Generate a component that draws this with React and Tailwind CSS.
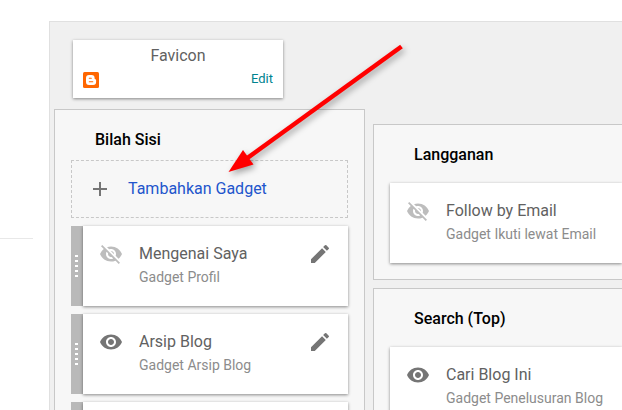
import React from "react";
import { MdAdd, MdEdit, MdVisibility, MdVisibilityOff } from "react-icons/md";

const sidebarGadgets = [
  { title: "Mengenai Saya", description: "Gadget Profil", visible: false },
  { title: "Arsip Blog", description: "Gadget Arsip Blog", visible: true },
];

const BloggerIcon = () => (
  <svg viewBox="0 0 16 16" className="size-4" aria-hidden="true">
    <rect width="16" height="16" rx="1.5" fill="#ff6600" />
    <path
      fill="#fff"
      d="M6 3h2.6a3 3 0 0 1 3 3v.6c0 .4.3.6.7.6.5 0 .8.3.8.8v2a3 3 0 0 1-3 3H6a3 3 0 0 1-3-3V6a3 3 0 0 1 3-3z"
    />
    <path stroke="#ff6600" strokeWidth="1.1" strokeLinecap="round" d="M6.3 6.3h2M6.3 9.7h3.5" />
  </svg>
);

const DragHandle = () => (
  <div className="flex w-3 shrink-0 cursor-move flex-col justify-center gap-[3px] bg-[#b9b9b9] pl-1">
    {[0, 1, 2, 3, 4].map((dot) => (
      <span key={dot} className="h-0.5 w-[3px] bg-white" />
    ))}
  </div>
);

const Gadget = ({ title, description, visible, draggable }) => {
  const Eye = visible ? MdVisibility : MdVisibilityOff;

  return (
    <li className="flex h-20">
      {draggable && <DragHandle />}
      <div className="flex min-w-0 flex-1 items-start bg-white p-4 shadow-[0_1px_3px_rgba(0,0,0,0.45)]">
        <Eye className={visible ? "size-6 shrink-0 text-[#757575]" : "size-6 shrink-0 text-[#bdbdbd]"} />
        <div className="ml-4 min-w-0 flex-1 whitespace-nowrap">
          <h3 className="text-base leading-6 text-[#616161]">{title}</h3>
          <p className="text-sm leading-[22px] text-[#8c8c8c]">{description}</p>
        </div>
        {draggable && (
          <button type="button" aria-label={`Edit ${title}`} className="cursor-pointer">
            <MdEdit className="size-6 text-[#757575]" />
          </button>
        )}
      </div>
    </li>
  );
};

const EmptySlot = () => (
  <li className="flex h-20">
    <DragHandle />
    <div className="flex-1 bg-white shadow-[0_1px_3px_rgba(0,0,0,0.45)]" />
  </li>
);

const SectionTitle = ({ children }) => (
  <h2 className="pl-6 text-base leading-6 font-medium text-black">{children}</h2>
);

const Arrow = () => (
  <svg
    viewBox="0 0 190 144"
    className="pointer-events-none absolute top-9 left-[222px] w-[190px] drop-shadow-[2px_3px_3px_rgba(0,0,0,0.35)]"
    aria-hidden="true"
  >
    <path d="M179.500 10.500 L24 123" stroke="#ff0000" strokeWidth="4.6" />
    <path d="M6.500 136 L21 114 L31.500 128.500 Z" fill="#ff0000" />
  </svg>
);

const App = () => {
  return (
    <div className="relative flex h-screen overflow-hidden bg-white font-['Roboto',sans-serif]">
      <nav className="w-[49px] shrink-0 pt-[238px]">
        <hr className="mr-4 border-[#e8e8e8]" />
      </nav>

      <main className="mt-[21px] flex min-w-0 flex-1 items-start gap-2 border-t border-l border-[#e0e0e0] bg-[#f0f0f0] pl-1">
        <div className="w-[311px] shrink-0 pt-[18px]">
          <section className="ml-[19px] w-[210px] bg-white px-2.5 pt-1 pb-2.5 shadow-[0_1px_3px_rgba(0,0,0,0.45)]">
            <h2 className="text-center text-base leading-6 text-[#616161]">Favicon</h2>
            <div className="flex h-5 items-end justify-between">
              <BloggerIcon />
              <a href="#favicon" className="text-[13px] leading-[18px] text-[#00838f]">
                Edit
              </a>
            </div>
          </section>

          <section className="mt-[11px] border border-[#c8c8c8] bg-[#f7f7f7] px-4 pt-[18px] pb-4">
            <SectionTitle>Bilah Sisi</SectionTitle>
            <button
              type="button"
              className="mt-2 flex h-[58px] w-full cursor-pointer items-center gap-4 border border-dashed border-[#c8c8c8] pl-4 text-base text-[#2255cc]"
            >
              <MdAdd className="size-6 text-[#757575]" />
              Tambahkan Gadget
            </button>
            <ul className="mt-2 flex flex-col gap-2">
              {sidebarGadgets.map((gadget) => (
                <Gadget key={gadget.title} {...gadget} draggable />
              ))}
              <EmptySlot />
            </ul>
          </section>
        </div>

        <div className="flex min-w-0 flex-1 flex-col gap-2 pt-[102px]">
          <section className="border border-r-0 border-[#c8c8c8] bg-[#f7f7f7] pt-[18px] pb-4 pl-4">
            <SectionTitle>Langganan</SectionTitle>
            <ul className="mt-4">
              <Gadget title="Follow by Email" description="Gadget Ikuti lewat Email" visible={false} />
            </ul>
          </section>
          <section className="border border-r-0 border-[#c8c8c8] bg-[#f7f7f7] pt-[18px] pb-4 pl-4">
            <SectionTitle>Search (Top)</SectionTitle>
            <ul className="mt-4">
              <Gadget title="Cari Blog Ini" description="Gadget Penelusuran Blog" visible />
            </ul>
          </section>
        </div>
      </main>

      <Arrow />
    </div>
  );
};

export default App;
